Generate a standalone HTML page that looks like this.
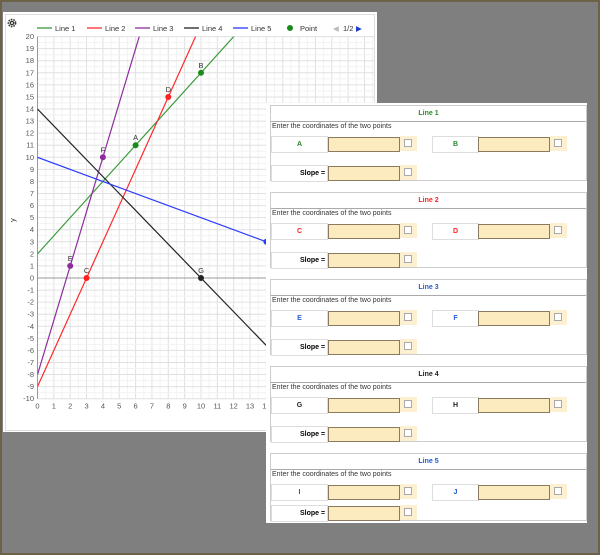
<!DOCTYPE html>
<html><head><style>
body{margin:0;width:600px;height:555px;overflow:hidden;background:#7f7f7f;font-family:"Liberation Sans",sans-serif;position:relative}
#frame{position:absolute;left:0;top:0;width:596px;height:551px;border:2px solid #6b6248}
#chart{position:absolute;left:3px;top:12px;width:374px;height:420px;background:#fff}
#panel{position:absolute;left:266px;top:103px;width:321px;height:420px;background:#fff}
.sec{position:absolute;left:4px;width:315px;border:1px solid #ccc;font-size:7px}
.ttl{height:15px;line-height:15px;text-align:center;font-weight:bold;border-bottom:1px solid #aaa}
.txt{position:absolute;left:1px;top:17px;color:#333}
.lab{position:absolute;height:15px;line-height:15px;border:1px solid #ddd;background:#fff;text-align:center;font-weight:bold}
.inp{position:absolute;height:13px;width:70px;background:#fdebc0;border:1px solid #8a7a60}
.chk{position:absolute;height:15px;width:17px;background:#fdf0d0}
.chk:after{content:"";position:absolute;left:4px;top:3px;width:6px;height:6px;border:1px solid #aaa;background:#fff}
</style></head><body>
<div id="frame"></div>
<div id="chart">
<svg id="plot" width="374" height="420" style="position:absolute;left:0;top:0" font-family="Liberation Sans" font-size="7.5"></svg>
</div>
<div id="panel"></div>
<script>
var s=document.getElementById('plot'),h='';
var ox=34.5,px=16.35,oy=266,py=12.07;
function X(v){return ox+v*px}function Y(v){return oy-v*py}
h+='<rect x="2.5" y="2.5" width="369" height="416" fill="none" stroke="#ddd"/>';
for(var i=0;i<=46;i++){var v=i/2,x=X(v);if(x>372)break;h+='<line x1="'+x+'" y1="'+Y(20)+'" x2="'+x+'" y2="'+Y(-10)+'" stroke="'+(i%2?'#f2f2f2':'#e0e0e0')+'"/>';}
for(var i=-20;i<=40;i++){var y=Y(i/2);h+='<line x1="'+X(0)+'" y1="'+y+'" x2="372" y2="'+y+'" stroke="'+(i%2?'#f2f2f2':'#e0e0e0')+'"/>';}
h+='<line x1="'+X(0)+'" y1="'+Y(20)+'" x2="'+X(0)+'" y2="'+Y(-10)+'" stroke="#999"/>';
h+='<line x1="'+X(0)+'" y1="'+Y(0)+'" x2="372" y2="'+Y(0)+'" stroke="#999"/>';
for(var i=-10;i<=20;i++)h+='<text x="31" y="'+(Y(i)+2.5)+'" text-anchor="end" fill="#555">'+i+'</text>';
for(var i=0;i<=20;i++)h+='<text x="'+X(i)+'" y="'+(Y(-10)+10)+'" text-anchor="middle" fill="#555">'+i+'</text>';
h+='<text x="12" y="210" fill="#333" transform="rotate(-90 12 210)">y</text>';
function L(m,b,c){var x1=0,x2=22;h+='<line x1="'+X(x1)+'" y1="'+Y(m*x1+b)+'" x2="'+X(x2)+'" y2="'+Y(m*x2+b)+'" stroke="'+c+'" stroke-width="1.2"/>'}
h+='<clipPath id="cp"><rect x="'+X(0)+'" y="'+Y(20)+'" width="340" height="'+(30*py)+'"/></clipPath><g clip-path="url(#cp)">';
L(1.5,2,'#3a9a3a');L(3,-9,'#ff2a2a');L(4.5,-8,'#8e2c9e');L(-1.4,14,'#222');L(-0.5,10,'#2a3aff');
h+='</g>';
function P(x,y,c,t){h+='<circle cx="'+X(x)+'" cy="'+Y(y)+'" r="3" fill="'+c+'"/><text x="'+X(x)+'" y="'+(Y(y)-5)+'" text-anchor="middle" fill="#333">'+t+'</text>'}
P(6,11,'#1a8a1a','A');P(10,17,'#1a8a1a','B');P(3,0,'#ff2020','C');P(8,15,'#ff2020','D');P(2,1,'#8e2c9e','E');P(4,10,'#8e2c9e','F');P(10,0,'#222','G');P(14,3,'#2a3aff','I');
var lg=[['Line 1','#3a9a3a',34],['Line 2','#ff2a2a',84],['Line 3','#8e2c9e',132],['Line 4','#222',181],['Line 5','#2a3aff',230]];
lg.forEach(function(a){h+='<line x1="'+a[2]+'" y1="16" x2="'+(a[2]+15)+'" y2="16" stroke="'+a[1]+'" stroke-width="1.3"/><text x="'+(a[2]+18)+'" y="19" fill="#333">'+a[0]+'</text>'});
h+='<circle cx="287" cy="16" r="3" fill="#1a8a1a"/><text x="297" y="19" fill="#333">Point</text><text x="330" y="19" fill="#bbb">◀</text><text x="340" y="19" fill="#333">1/2</text><text x="353" y="19" fill="#1a3acc">▶</text>';
h+='<circle cx="9" cy="11" r="3.6" fill="none" stroke="#333" stroke-width="1.6" stroke-dasharray="1.6 1"/><circle cx="9" cy="11" r="2.3" fill="#333"/><circle cx="9" cy="11" r="1" fill="#fff"/>';
s.innerHTML=h;
var secs=[['Line 1','#2a8a2a','A','B'],['Line 2','#ff2020','C','D'],['Line 3','#2a5acc','E','F'],['Line 4','#222','G','H'],['Line 5','#1a5acc','I','J']];
var p='';
secs.forEach(function(a,i){var t=2+i*87;
p+='<div class="sec" style="top:'+t+'px;height:'+(i==4?66:74)+'px"><div class="ttl" style="color:'+a[1]+'">'+a[0]+'</div><div class="txt">Enter the coordinates of the two points</div>'+
'<div class="lab" style="left:0;top:30px;width:55px;color:'+a[1]+'">'+a[2]+'</div><div class="inp" style="left:57px;top:31px"></div><div class="chk" style="left:129px;top:30px"></div>'+
'<div class="lab" style="left:161px;top:30px;width:45px;color:'+a[1]+'">'+a[3]+'</div><div class="inp" style="left:207px;top:31px"></div><div class="chk" style="left:279px;top:30px"></div>'+
'<div class="lab" style="left:0;top:'+(i==4?51:59)+'px;width:55px;text-align:right">Slope =&nbsp;</div><div class="inp" style="left:57px;top:'+(i==4?52:60)+'px"></div><div class="chk" style="left:129px;top:'+(i==4?51:59)+'px"></div></div>';});
document.getElementById('panel').innerHTML=p;
</script>
</body></html>
